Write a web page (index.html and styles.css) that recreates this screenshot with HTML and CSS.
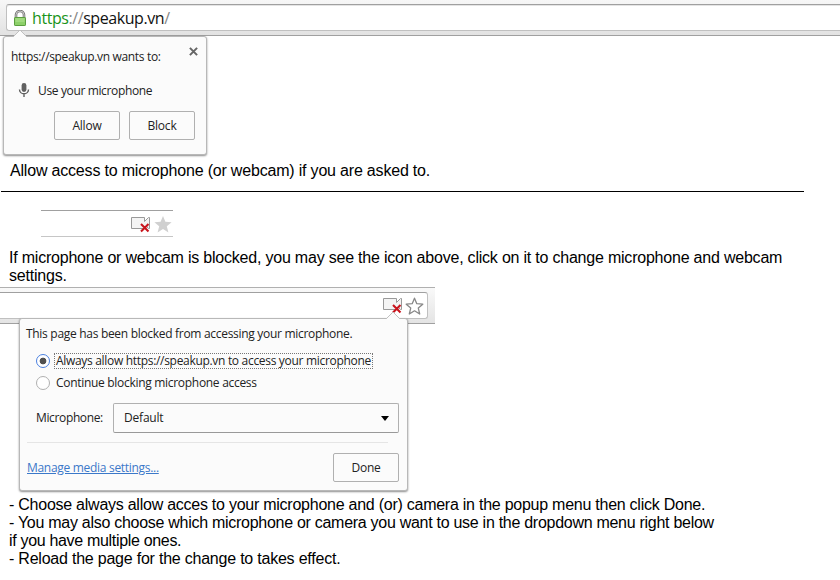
FILE: index.html
```html
<!DOCTYPE html>
<html lang="en">
<head>
<meta charset="utf-8">
<title>Microphone access</title>
<link rel="stylesheet" href="styles.css">
</head>
<body>
<section class="ask">
  <div class="toolbar">
    <div class="address">
      <svg class="lock" width="14" height="16" viewBox="0 0 14 16"><path d="M3 8V4.800a4 3.800 0 0 1 8 0V8" fill="none" stroke="#777" stroke-width="2.600"/><path d="M3 8V4.800a4 3.800 0 0 1 8 0V8" fill="none" stroke="#ddd" stroke-width=".8"/><rect x="1.500" y="7.500" width="11" height="8" rx=".6" fill="#8dd069" stroke="#5b9e40"/><path d="M2.500 9h9M2.500 11h9" stroke="#b4e595"/></svg>
      <span class="url"><span class="secure">https</span><span class="faint">://</span>speakup.vn<span class="faint">/</span></span>
    </div>
  </div>
  <div class="popup popup-ask">
    <svg class="notch" width="14" height="8" viewBox="0 0 14 8"><path d="M0 8L7 1l7 7" fill="#fbfbfb" stroke="#c0c0c0"/></svg>
    <div class="ask-head"><span class="ui t-wants">https://speakup.vn wants to:</span>
      <svg class="close" width="9" height="9" viewBox="0 0 8 8"><path d="M.8.8l6.400 6.400M7.200.8L.8 7.200" stroke="#666" stroke-width="1.800"/></svg>
    </div>
    <div class="ask-item">
      <svg width="12" height="15" viewBox="0 0 12 15"><rect x="3.600" y="0" width="4.800" height="9" rx="2.400" fill="#606060"/><path d="M1.500 6.500a4.500 4.300 0 0 0 9 0M6 11v3" fill="none" stroke="#606060" stroke-width="1.400"/></svg>
      <span class="ui t-use">Use your microphone</span>
    </div>
    <div class="ask-actions"><button class="btn">Allow</button><button class="btn">Block</button></div>
  </div>
</section>
<p class="note note-allow">Allow access to microphone (or webcam) if you are asked to.</p>
<hr class="rule">
<div class="mini">
  <svg width="20" height="17" viewBox="0 0 20 17"><path d="M.5 1.500h13v4l4-4h1v11h-1l-2-2-2 2H.5z" fill="#f4f4f4" stroke="#999"/><path d="M10 8l7.500 7.500M17.500 8L10 15.500" stroke="#c8141c" stroke-width="2.100"/></svg>
  <svg width="18" height="17" viewBox="0 0 18 17"><path d="M9 0l2.400 5.800 6.200.4-4.800 4 1.600 6.200L9 13l-5.400 3.400 1.600-6.200-4.800-4 6.200-.4z" fill="#d0d0d0"/></svg>
</div>
<p class="note note-blocked">If microphone or webcam is blocked, you may see the icon above, click on it to change microphone and webcam<br>settings.</p>
<section class="blocked">
  <div class="toolbar2">
    <div class="address2">
      <svg width="20" height="17" viewBox="0 0 20 17"><path d="M.5 1.500h13v4l4-4h1v11h-1l-2-2-2 2H.5z" fill="#f4f4f4" stroke="#999"/><path d="M10 8l7.500 7.500M17.500 8L10 15.500" stroke="#c8141c" stroke-width="2.100"/></svg>
      <svg width="19" height="18" viewBox="0 0 19 18"><path d="M9.500 1.200l2.300 5.500 6 .5-4.500 3.900 1.400 5.900-5.200-3.200L4.300 17l1.400-5.900-4.500-3.900 6-.5z" fill="#fff" stroke="#888" stroke-width="1.300" stroke-linejoin="round"/></svg>
    </div>
  </div>
  <div class="popup popup-blocked">
    <svg class="notch" width="14" height="8" viewBox="0 0 14 8"><path d="M0 8L7 1l7 7" fill="#fbfbfb" stroke="#c0c0c0"/></svg>
    <div class="ui heading"><span class="t-page">This page has been blocked from accessing your microphone.</span></div>
    <label class="choice"><i class="radio on"></i><span class="ui focus"><span class="t-always">Always allow https://speakup.vn to access your microphone</span></span></label>
    <label class="choice second"><i class="radio"></i><span class="ui plain"><span class="t-cont">Continue blocking microphone access</span></span></label>
    <div class="device"><span class="ui t-mic">Microphone:</span>
      <div class="select ui"><span class="t-def">Default</span><i class="caret"></i></div>
    </div>
    <div class="foot"><a class="ui t-manage">Manage media settings...</a><button class="btn">Done</button></div>
  </div>
</section>
<p class="note note-steps">- Choose always allow acces to your microphone and (or) camera in the popup menu then click Done.<br><span class="wide">- You may also choose which microphone or camera you want to use in the dropdown menu right below</span><br><span class="multi">if you have multiple ones.</span><br><span class="short">- Reload the page for the change to takes effect.</span></p>
</body>
</html>
```
FILE: styles.css
```css
* { box-sizing: border-box; }
body { margin: 0; width: 840px; height: 580px; overflow: hidden; background: #fff; color: #000; font: 16px/18px "Liberation Sans", sans-serif; }
svg, i { display: block; flex: none; }
.ui, .btn { font: 12px/16px "Open Sans", sans-serif; color: #222; white-space: nowrap; }
.ask { position: relative; height: 162px; }
.toolbar { height: 36px; padding: 4px 0 0 6px; background: linear-gradient(#f7f7f7, #e2e2e2); border-bottom: 1px solid #a0a0a0; }
.address { display: flex; align-items: center; height: 27px; padding-left: 6px; gap: 5px; background: #fff; border: 1px solid #c0c0c0; border-top-color: #a0a0a0; border-right: 0; border-radius: 3px 0 0 3px; box-shadow: inset 0 1px #e4e4e4; }
.url { font: 16px/22px "Open Sans", sans-serif; letter-spacing: -.43px; color: #111; }
.secure { color: #1a941a; }
.faint { color: #888; }
.popup { position: absolute; background: #fbfbfb; border: 1px solid #b8b8b8; border-radius: 3px; box-shadow: 0 1px 2px rgba(0,0,0,.45); }
.popup-ask { left: 3px; top: 36px; width: 204px; height: 119px; padding: 10px 8px 0 7px; }
.notch { position: absolute; top: -8px; }
.popup-ask .notch { left: 9px; }
.ask-head { display: flex; justify-content: space-between; height: 36px; padding-top: 2px; }
.close { margin-top: -2px; }
.ask-item { display: flex; gap: 8px; padding-left: 7px; height: 28px; }
.ask-actions { display: flex; justify-content: flex-end; gap: 9px; padding-right: 3px; }
.btn { width: 66px; height: 29px; padding: 0; letter-spacing: -.2px; background: #fbfbfb; border: 1px solid #b0b0b0; border-radius: 2px; }
.note { margin: 0; padding-left: 9px; letter-spacing: -.25px; white-space: nowrap; }
.note-allow { padding-left: 10px; letter-spacing: -.19px; }
.wide { letter-spacing: -.28px; }
.multi { letter-spacing: -.32px; }
.short { letter-spacing: -.22px; }
.rule { width: 803px; height: 1px; margin: 11px 0 18px 1px; border: 0; background: #000; }
.mini { display: flex; justify-content: flex-end; align-items: flex-start; gap: 3px; width: 132px; height: 27px; margin-left: 41px; padding: 5px 1px 0 0; border-top: 1px solid #a0a0a0; border-bottom: 1px solid #c6c6c6; }
.note-blocked { margin-top: 12px; letter-spacing: -.213px; }
.blocked { position: relative; height: 209px; margin-top: 2px; }
.toolbar2 { width: 435px; height: 37px; padding: 4px 7px 0 0; background: linear-gradient(#f9f9f9, #e4e4e4); border-top: 1px solid #b0b0b0; border-bottom: 1px solid #a0a0a0; }
.address2 { display: flex; justify-content: flex-end; height: 27px; padding: 4px 3px 0; gap: 2px; background: #fff; border: 1px solid #c0c0c0; border-top-color: #a0a0a0; border-left: 0; border-radius: 0 3px 3px 0; }
.popup-blocked { left: 19px; top: 31px; width: 389px; height: 173px; padding: 7px 8px 0 6px; }
.popup-blocked .notch { left: 366px; }
.heading { height: 27px; }
.choice { display: flex; align-items: center; gap: 4px; height: 16px; padding-left: 10px; }
.second { margin-top: 6px; }
.radio { width: 14px; height: 14px; border: 1px solid #b0b0b0; border-radius: 50%; background: #fff; }
.radio.on { border-color: #4a80e0; background: radial-gradient(circle, #505050 0 3px, #fff 3.7px); }
.focus, .plain { padding: 0 1px; line-height: 14px; border: 1px dotted transparent; }
.focus { border-color: #777; }
.device { display: flex; align-items: center; justify-content: space-between; height: 30px; margin-top: 12px; padding-left: 10px; }
.select { display: flex; align-items: center; justify-content: space-between; width: 286px; height: 30px; padding: 0 9px 0 10px; border: 1px solid #b0b0b0; border-bottom-color: #999; border-radius: 2px; }
.caret { border: 4px solid transparent; border-top: 5px solid #000; border-bottom: 0; }
.foot { display: flex; justify-content: space-between; align-items: center; margin: 9px 0 0 1px; padding-top: 11px; background: linear-gradient(#e5e5e5, #e5e5e5) 0 0 / 361px 1px no-repeat; }
.foot a { color: #3b78c9; text-decoration: underline; }
.t-wants { letter-spacing: -.34px; }
.t-use { letter-spacing: -.36px; }
.t-page, .t-cont, .t-manage { letter-spacing: -.3px; }
.t-mic { letter-spacing: -.36px; }
.t-always { letter-spacing: -.31px; }
.t-def { letter-spacing: -.2px; }
```
